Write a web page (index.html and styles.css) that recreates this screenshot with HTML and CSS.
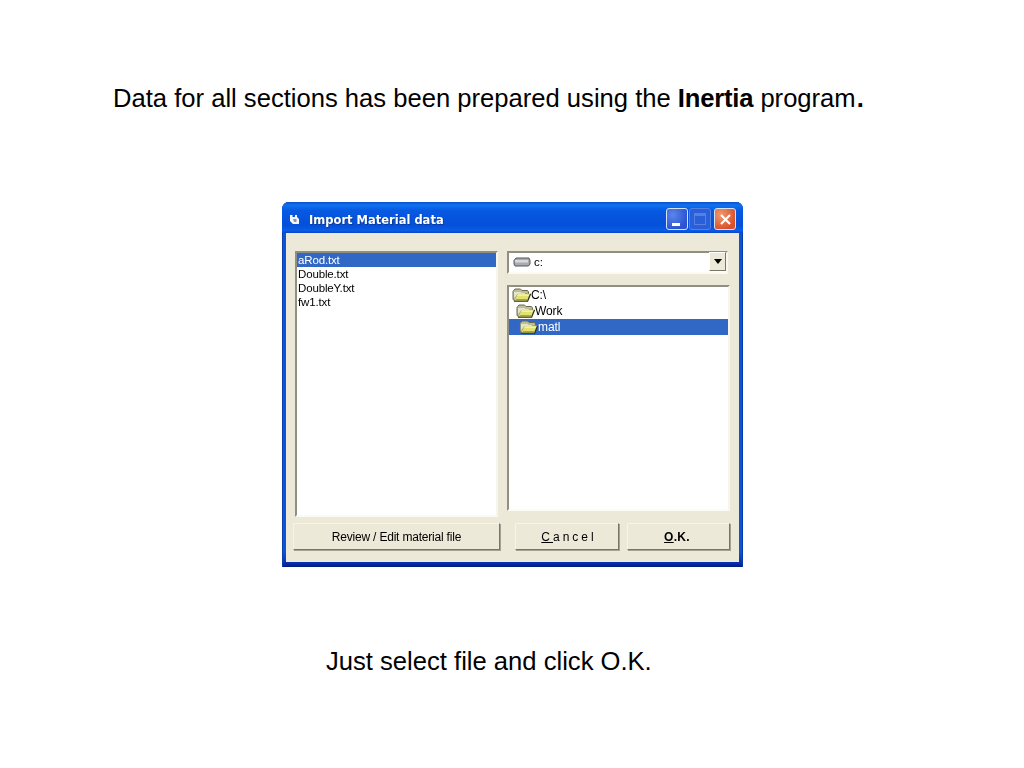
FILE: index.html
```html
<!DOCTYPE html>
<html lang="en">
<head>
<meta charset="utf-8">
<title>Import Material data</title>
<link rel="stylesheet" href="styles.css">
</head>
<body>
<svg class="defs" width="0" height="0" aria-hidden="true">
  <defs>
    <symbol id="folder" viewBox="0 0 19 14">
      <path d="M1 11.5V3.5L3 1H8.5L10 2.5H15.5L16.5 4V6H6L2.5 12.5Z" fill="#bdbd9c" stroke="#6a6a55" stroke-width="1"/>
      <path d="M2 4H8.5L9.5 5H13V6H5.5L2 10Z" fill="#e4e4d0"/>
      <path d="M2 13.2L5.6 5.8H18.6L15.6 13.2Z" fill="#e2e272"/>
      <path d="M2 13.2H15.6L18.6 5.8" fill="none" stroke="#2f2f22" stroke-width="1.3"/>
      <path d="M6 6.5H17.4L16.8 8H5.4Z" fill="#f2f2a6"/>
      <path d="M3.6 12.4L4.2 11H15.8L15.2 12.4Z" fill="#a6a640"/>
    </symbol>
  </defs>
</svg>
<main class="slide">
  <h1 class="headline">Data for all sections has been prepared using the <b class="strong-word">Inertia</b> program<b class="strong-dot">.</b></h1>
  <section class="window">
    <header class="titlebar">
      <svg class="app-icon" width="11" height="11" viewBox="0 0 11 11"><path d="M1 1H3.5V3H6V1H8V3L10 5V10H4L1 7Z" fill="#f4f6fb"/><path d="M4 5H7.5V8H5Z" fill="#8a94b5"/></svg>
      <span class="title">Import Material data</span>
      <span class="caption-btn min"><i class="min-bar"></i></span>
      <span class="caption-btn max"><i class="max-box"></i></span>
      <span class="caption-btn close">
        <svg width="13" height="13" viewBox="0 0 13 13"><path d="M2 2L11 11M11 2L2 11" stroke="#fff" stroke-width="2.2" fill="none"/></svg>
      </span>
    </header>
    <div class="client">
      <div class="panes">
        <ul class="list sunken">
          <li class="selected">aRod.txt</li>
          <li>Double.txt</li>
          <li>DoubleY.txt</li>
          <li>fw1.txt</li>
        </ul>
        <div class="right-pane">
          <div class="combo sunken">
            <svg class="drive" width="18" height="10" viewBox="0 0 18 10"><path d="M1 3.5L3 1H16L17 3.5V7L15.5 9H2L1 7Z" fill="#a9abb0" stroke="#55575c"/><path d="M2 3H15V5.5H2Z" fill="#d6d8dc"/></svg>
            <span class="combo-text">c:</span>
            <span class="combo-arrow"><i></i></span>
          </div>
          <ul class="tree sunken">
            <li class="lvl0"><svg class="folder"><use href="#folder"/></svg>C:\</li>
            <li class="lvl1"><svg class="folder"><use href="#folder"/></svg>Work</li>
            <li class="lvl2 selected"><svg class="folder"><use href="#folder"/></svg>matl</li>
          </ul>
        </div>
      </div>
      <div class="actions">
        <button class="btn btn-review">Review / Edit material file</button>
        <button class="btn btn-cancel"><u>C</u>ancel</button>
        <button class="btn btn-ok"><u>O</u>.K.</button>
      </div>
    </div>
  </section>
  <p class="caption">Just select file and click O.K.</p>
</main>
</body>
</html>
```
FILE: styles.css
```css
* { box-sizing: border-box; }
html, body { margin: 0; padding: 0; background: #fff; }
body { font-family: "Liberation Sans", Arial, sans-serif; color: #000; width: 1024px; height: 768px; overflow: hidden; }
.defs { position: absolute; }
.slide { display: flex; flex-direction: column; align-items: flex-start; }
.headline { margin: 84px 0 0 113px; font-size: 25.6px; line-height: 28px; font-weight: 400; white-space: nowrap; }
.strong-word { letter-spacing: -.2px; }
.strong-dot { margin-left: 1px; }
.caption { margin: 80px 0 0 326px; font-size: 25.6px; line-height: 28px; white-space: nowrap; }

.window { margin: 90px 0 0 282px; width: 461px; height: 365px; display: flex; flex-direction: column;
  background: linear-gradient(#0a55d8 0, #0a55d8 96%, #0836b4 98.6%, #001a80 100%); border-radius: 7px 7px 0 0; padding: 0 4px 5px;
  box-shadow: inset 1px 0 0 #0a3fb0, inset -1px 0 0 #0a3aa8; filter: blur(.35px); }
.titlebar { height: 31px; margin: 0 -4px; padding: 3px 7px 0 7px; display: flex; align-items: center; flex: none;
  border-radius: 7px 7px 0 0;
  background: linear-gradient(#0a50d0 0, #0f72ee 10%, #0758e2 28%, #0450d8 75%, #0a5ce6 92%, #0846c4 100%); }
.app-icon { flex: none; }
.title { margin: 2px 0 0 9px; flex: 1; color: #fff; font: 700 12.5px/16px "DejaVu Sans", sans-serif; text-shadow: 1px 1px 0 #0a3a9c; transform: scaleX(.92); transform-origin: left center; white-space: nowrap; }
.caption-btn { width: 22px; height: 22px; border: 1px solid #d6e2f8; border-radius: 3px; display: flex; align-items: center; justify-content: center; flex: none; }
.caption-btn.min { background: radial-gradient(circle at 30% 30%, #5a86ea, #2a52d2 75%); }
.caption-btn.max { margin-left: 1px; background: #2a5fda; border-color: #5580e2; }
.caption-btn.close { margin-left: 3px; background: radial-gradient(circle at 30% 30%, #ef9a72, #d8502a 75%); }
.min-bar { width: 8px; height: 3px; background: #fff; margin-top: 10px; margin-right: 3px; }
.max-box { width: 12px; height: 12px; border: 1px solid #5580e2; border-top-width: 3px; }

.client { flex: 1; background: #ece9d8; padding: 18px 9px 12px 7px; display: flex; flex-direction: column; min-height: 0; }
.panes { flex: 1; display: flex; min-height: 0; padding-left: 2px; }
.sunken { background: #fff; border: 2px solid; border-color: #918f81 #f6f5ee #fbfaf3 #918f81; }
.list { margin: 0; padding: 0; list-style: none; width: 204px; height: 266px; font-size: 11.5px; line-height: 14px; letter-spacing: -.15px; }
.list li { padding-left: 1px; height: 14px; }
.list .selected { background: #3168c5; color: #fff; }
.right-pane { margin-left: 9px; flex: 1; display: flex; flex-direction: column; }
.combo { width: 221px; height: 23px; display: flex; align-items: center; padding: 0 0 2px 4px; font-size: 11.5px; flex: none; }
.drive { flex: none; }
.combo-text { margin-left: 3px; flex: 1; }
.combo-arrow { width: 17px; height: 19px; background: #ece9d8; border: 1px solid; border-color: #fff #77766a #77766a #fff; display: flex; align-items: center; justify-content: center; }
.combo-arrow i { width: 0; height: 0; border: 4.5px solid transparent; border-top: 5px solid #000; border-bottom: 0; }
.tree { margin: 11px 0 0; padding: 0; list-style: none; width: 223px; height: 226px; font-size: 12px; line-height: 16px; letter-spacing: -.1px; }
.tree li { display: flex; align-items: center; height: 16px; }
.folder { width: 19px; height: 14px; flex: none; }
.lvl0 { padding-left: 3px; }
.lvl1 { padding-left: 7px; }
.lvl2 { padding-left: 10px; }
.tree .selected { background: #3168c5; color: #fff; }
.actions { display: flex; flex: none; margin-top: 6px; }
.btn { font: 12px/1 "Liberation Sans", Arial, sans-serif; color: #000; background: #ece9d8; height: 27px; padding: 0; border: 1px solid; border-color: #f6f4ea #77766a #77766a #f6f4ea; box-shadow: 1px 1px 0 #a3a294; }
.btn-review { width: 207px; letter-spacing: -.2px; }
.btn-cancel { width: 104px; margin-left: 15px; padding-left: 4px; letter-spacing: 3px; }
.btn-ok { width: 103px; margin-left: 8px; padding-right: 3px; font-weight: 700; letter-spacing: .3px; }
```
